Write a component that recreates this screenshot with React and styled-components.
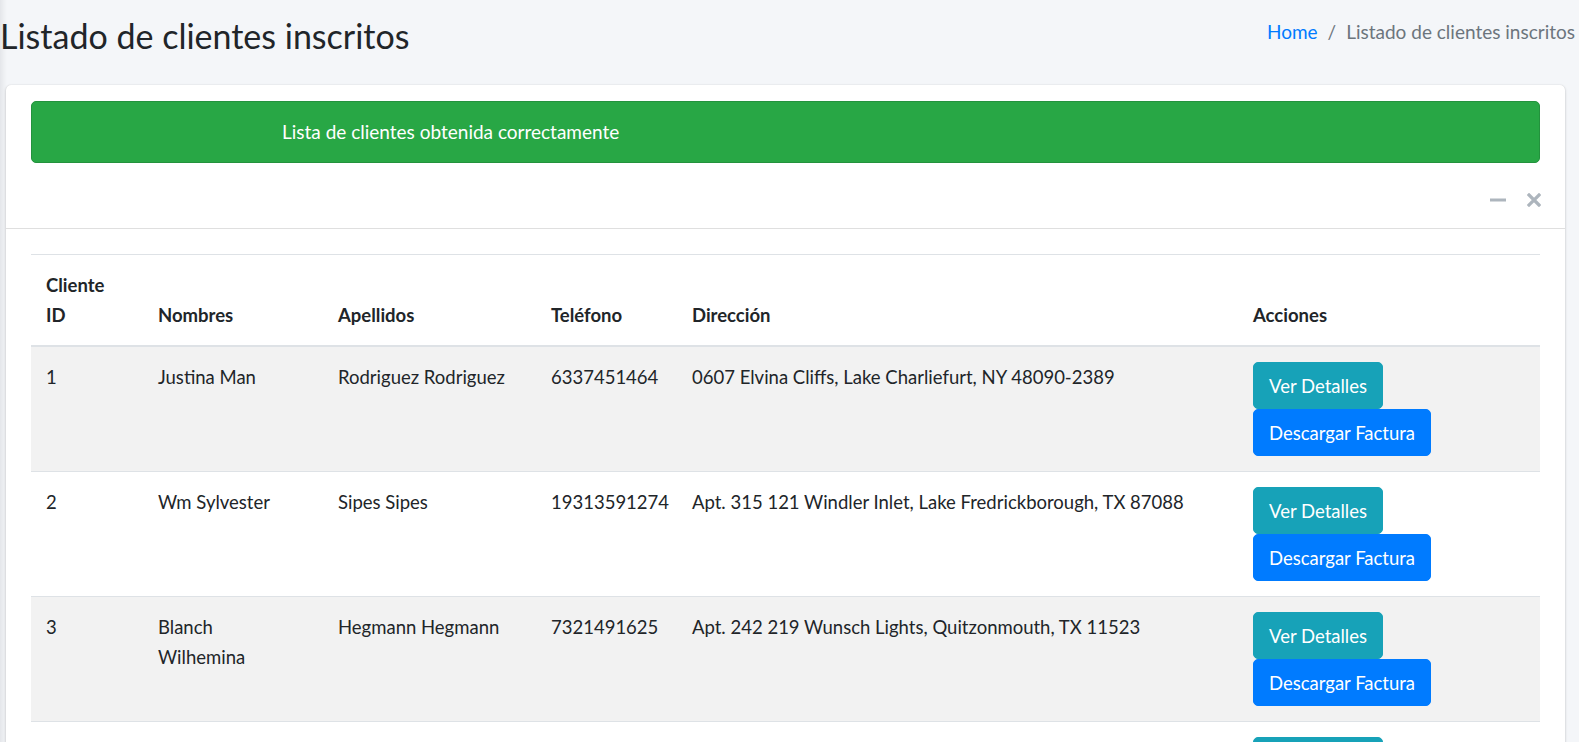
import React from 'react';
import styled, { createGlobalStyle } from 'styled-components';

const GlobalStyle = createGlobalStyle`
  html, body {
    margin: 0;
    padding: 0;
  }
  body {
    background: #f4f6f9;
    color: #212529;
    font-family: Lato, "Open Sans", sans-serif;
    font-size: 18.5px;
    line-height: 1.5;
    overflow: hidden;
  }
`;

const clientes = [
  {
    id: 1,
    nombres: 'Justina Man',
    apellidos: 'Rodriguez Rodriguez',
    telefono: '6337451464',
    direccion: '0607 Elvina Cliffs, Lake Charliefurt, NY 48090-2389',
  },
  {
    id: 2,
    nombres: 'Wm Sylvester',
    apellidos: 'Sipes Sipes',
    telefono: '19313591274',
    direccion: 'Apt. 315 121 Windler Inlet, Lake Fredrickborough, TX 87088',
  },
  {
    id: 3,
    nombres: 'Blanch Wilhemina',
    apellidos: 'Hegmann Hegmann',
    telefono: '7321491625',
    direccion: 'Apt. 242 219 Wunsch Lights, Quitzonmouth, TX 11523',
  },
  // la fila siguiente queda bajo el borde, solo asoman sus botones
  { id: null, nombres: '', apellidos: '', telefono: '', direccion: '' },
];

const columnas = [
  { label: 'Cliente ID', width: 112, max: 70 },
  { label: 'Nombres', width: 180 },
  { label: 'Apellidos', width: 213 },
  { label: 'Teléfono', width: 141 },
  { label: 'Dirección', width: 561 },
  { label: 'Acciones', width: 302 },
];

const MinusIcon = () => (
  <svg width="16" height="4" viewBox="0 0 16 4">
    <rect x="0" y="0.5" width="16" height="3" fill="#adb5bd" />
  </svg>
);

const TimesIcon = () => (
  <svg width="14" height="14" viewBox="0 0 14 14">
    <path d="M2 2 L12 12 M12 2 L2 12" stroke="#adb5bd" strokeWidth="3.2" strokeLinecap="square" />
  </svg>
);

const App = () => {
  return (
    <Page>
      <GlobalStyle />
      <ContentHeader>
        <Title>Listado de clientes inscritos</Title>
        <Breadcrumb>
          <Crumb href="#">Home</Crumb>
          <Separator>/</Separator>
          <ActiveCrumb>Listado de clientes inscritos</ActiveCrumb>
        </Breadcrumb>
      </ContentHeader>

      <Card>
        <AlertWrap>
          <Alert>Lista de clientes obtenida correctamente</Alert>
        </AlertWrap>

        <CardHeader>
          <ToolButton aria-label="Minimizar">
            <MinusIcon />
          </ToolButton>
          <ToolButton aria-label="Cerrar">
            <TimesIcon />
          </ToolButton>
        </CardHeader>

        <CardBody>
          <Table>
            <colgroup>
              {columnas.map((c) => (
                <col key={c.label} style={{ width: c.width }} />
              ))}
            </colgroup>
            <thead>
              <tr>
                {columnas.map((c) => (
                  <Th key={c.label}>
                    <Label $max={c.max}>{c.label}</Label>
                  </Th>
                ))}
              </tr>
            </thead>
            <tbody>
              {clientes.map((cliente, i) => (
                <Row key={i}>
                  <Td>{cliente.id}</Td>
                  <Td>
                    <Label $max={140}>{cliente.nombres}</Label>
                  </Td>
                  <Td>{cliente.apellidos}</Td>
                  <Td>{cliente.telefono}</Td>
                  <Td>{cliente.direccion}</Td>
                  <Td $actions>
                    <Actions>
                      <Button $variant="info">Ver Detalles</Button>
                      <Button $variant="primary">Descargar Factura</Button>
                    </Actions>
                  </Td>
                </Row>
              ))}
            </tbody>
          </Table>
        </CardBody>
      </Card>
    </Page>
  );
};

const Page = styled.div`
  min-height: 742px;
  background: linear-gradient(to right, #e4e6ea 0, #eef0f3 4px, #f4f6f9 7px) #f4f6f9;
`;

const ContentHeader = styled.div`
  display: flex;
  justify-content: space-between;
  align-items: flex-start;
  padding: 0 4px 0 0;
  height: 85px;
  box-sizing: border-box;
`;

const Title = styled.h1`
  margin: 16px 0 0;
  font-size: 34px;
  font-weight: 400;
  line-height: 1.2;
  color: #212529;
`;

const Breadcrumb = styled.div`
  display: flex;
  align-items: center;
  margin-top: 17px;
  font-size: 19px;
  line-height: 30px;
`;

const Crumb = styled.a`
  color: #007bff;
  text-decoration: none;
`;

const Separator = styled.span`
  color: #6c757d;
  padding: 0 10px;
`;

const ActiveCrumb = styled.span`
  color: #6c757d;
`;

const Card = styled.div`
  margin: 0 14px 0 6px;
  background: #fff;
  border-radius: 5px;
  box-shadow: 0 0 1px rgba(0, 0, 0, 0.125), 0 1px 3px rgba(0, 0, 0, 0.2);
`;

const AlertWrap = styled.div`
  padding: 16px 25px 0;
`;

const Alert = styled.div`
  background: #28a745;
  border: 1px solid #23923d;
  border-radius: 5px;
  color: #fff;
  font-size: 19px;
  padding: 15px 25px 15px 250px;
  line-height: 30px;
`;

const CardHeader = styled.div`
  display: flex;
  justify-content: flex-end;
  align-items: center;
  gap: 21px;
  height: 66px;
  box-sizing: border-box;
  padding: 8px 24px 0;
  border-bottom: 1px solid rgba(0, 0, 0, 0.125);
`;

const ToolButton = styled.button`
  display: flex;
  align-items: center;
  justify-content: center;
  background: transparent;
  border: 0;
  padding: 0;
  cursor: pointer;
`;

const CardBody = styled.div`
  padding: 25px 25px 0;
`;

const Table = styled.table`
  width: 100%;
  table-layout: fixed;
  border-collapse: collapse;
  color: #212529;
`;

const Th = styled.th`
  text-align: left;
  font-weight: 700;
  vertical-align: bottom;
  padding: 15px;
  line-height: 30px;
  border-top: 1px solid #dee2e6;
  border-bottom: 2px solid #dee2e6;
`;

const Label = styled.span`
  display: inline-block;
  max-width: ${({ $max }) => ($max ? `${$max}px` : 'none')};
`;

const Row = styled.tr`
  &:nth-of-type(odd) {
    background: rgba(0, 0, 0, 0.05);
  }
`;

const Td = styled.td`
  vertical-align: top;
  padding: ${({ $actions }) => ($actions ? '15px' : '15px 15px 15px')};
  line-height: 30px;
  border-top: 1px solid #dee2e6;
  white-space: normal;
`;

const Actions = styled.div`
  display: flex;
  flex-direction: column;
  align-items: flex-start;
`;

const Button = styled.button`
  font-family: inherit;
  font-size: 18.5px;
  line-height: 30px;
  padding: 7.5px 15px;
  border-radius: 5px;
  color: #fff;
  cursor: pointer;
  background: ${({ $variant }) => ($variant === 'info' ? '#17a2b8' : '#007bff')};
  border: 1px solid ${({ $variant }) => ($variant === 'info' ? '#17a2b8' : '#007bff')};
`;

export default App;
